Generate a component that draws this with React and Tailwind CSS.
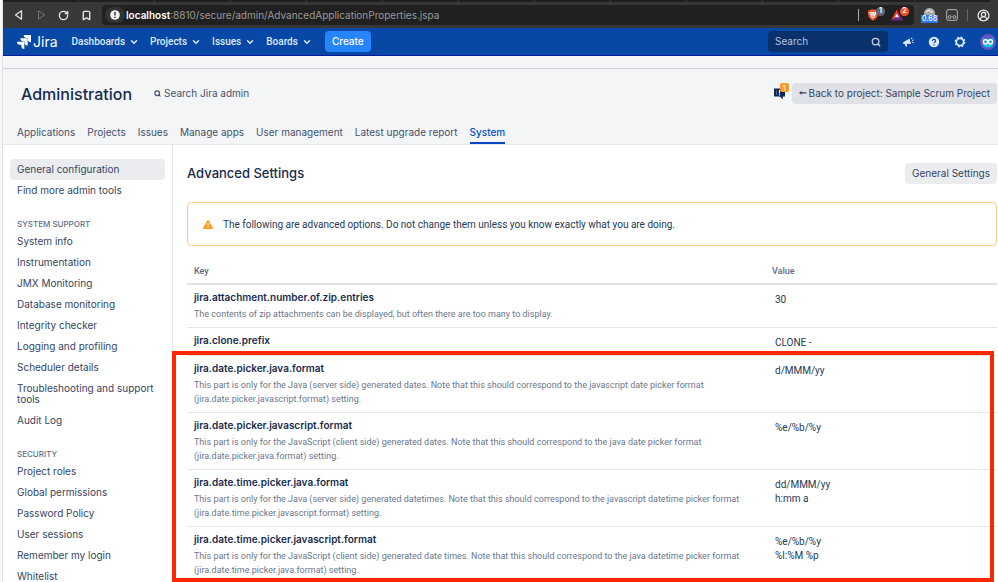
import React from 'react';
import { SiJira, SiBrave } from 'react-icons/si';
import { ChevronDown, Bookmark, RotateCw, Search, CircleUserRound } from 'lucide-react';

const navItems = ['Dashboards', 'Projects', 'Issues', 'Boards'];

const adminTabs = ['Applications', 'Projects', 'Issues', 'Manage apps', 'User management', 'Latest upgrade report', 'System'];

const sidebarSections = [
  {
    title: 'System support',
    items: [
      'System info',
      'Instrumentation',
      'JMX Monitoring',
      'Database monitoring',
      'Integrity checker',
      'Logging and profiling',
      'Scheduler details',
      'Troubleshooting and support tools',
      'Audit Log',
    ],
  },
  {
    title: 'Security',
    items: ['Project roles', 'Global permissions', 'Password Policy', 'User sessions', 'Remember my login', 'Whitelist'],
  },
];

const generalRows = [
  {
    key: 'jira.attachment.number.of.zip.entries',
    description: ['The contents of zip attachments can be displayed, but often there are too many to display.'],
    value: ['30'],
  },
  { key: 'jira.clone.prefix', description: [], value: ['CLONE -'] },
];

const dateRows = [
  {
    key: 'jira.date.picker.java.format',
    description: [
      'This part is only for the Java (server side) generated dates. Note that this should correspond to the javascript date picker format',
      '(jira.date.picker.javascript.format) setting.',
    ],
    value: ['d/MMM/yy'],
  },
  {
    key: 'jira.date.picker.javascript.format',
    description: [
      'This part is only for the JavaScript (client side) generated dates. Note that this should correspond to the java date picker format',
      '(jira.date.picker.java.format) setting.',
    ],
    value: ['%e/%b/%y'],
  },
  {
    key: 'jira.date.time.picker.java.format',
    description: [
      'This part is only for the Java (server side) generated datetimes. Note that this should correspond to the javascript datetime picker format',
      '(jira.date.time.picker.javascript.format) setting.',
    ],
    value: ['dd/MMM/yy', 'h:mm a'],
  },
  {
    key: 'jira.date.time.picker.javascript.format',
    description: [
      'This part is only for the JavaScript (client side) generated date times. Note that this should correspond to the java datetime picker format',
      '(jira.date.time.picker.java.format) setting.',
    ],
    value: ['%e/%b/%y', '%l:%M %p'],
  },
];

const BrowserBar = () => (
  <div className="bg-[#383838]">
    {/* Bottom edge of the tab strip */}
    <div className="flex h-[2px] gap-px pr-2">
      {[0, 1, 2, 3, 4, 5, 6, 7, 8, 9, 10, 11, 12].map((n) => (
        <div key={n} className="flex-1 bg-[#1f1f1f]" />
      ))}
    </div>
    <div className="flex h-[26px] items-center pl-[11px] pr-2 text-[#e4e4e4]">
      <button aria-label="Back" className="mr-3">
        <svg viewBox="0 0 10 10" className="h-[10px] w-[10px]" fill="none" stroke="currentColor" strokeWidth="1.3" strokeLinejoin="round">
          <path d="M7.500 .8v8.400L1.500 5z" />
        </svg>
      </button>
      <button aria-label="Forward" className="mr-3 text-[#777777]">
        <svg viewBox="0 0 10 10" className="h-[10px] w-[10px]" fill="none" stroke="currentColor" strokeWidth="1" strokeLinejoin="round">
          <path d="M2.500 .8v8.400L8.500 5z" />
        </svg>
      </button>
      <button aria-label="Reload" className="mr-3">
        <RotateCw className="h-[11px] w-[11px]" strokeWidth={3} />
      </button>
      <button aria-label="Bookmark" className="mr-[10px]">
        <Bookmark className="h-[11px] w-[11px]" strokeWidth={3} />
      </button>
      <div className="flex h-5 flex-1 items-center rounded bg-[#202020] pl-[3px] pr-[5px]">
        <span className="mr-px flex h-4 w-5 items-center justify-center rounded-full bg-[#333333]">
          <svg viewBox="0 0 10 10" className="h-[10px] w-[10px]">
            <circle cx="5" cy="5" r="4.8" fill="#f2f2f2" />
            <path d="M5 2v3.6M5 6.8v1.2" stroke="#202020" strokeWidth="1.3" />
          </svg>
        </span>
        <span className="flex-1 text-[10px] text-[#9a9a9a]">
          <b className="font-semibold text-white">localhost</b>:8810/secure/admin/AdvancedApplicationProperties.jspa
        </span>
        <span className="mr-2 h-3 w-px bg-[#aaaaaa]" />
        <span className="relative mr-3">
          <svg viewBox="0 0 12 12" className="h-3 w-3">
            <path d="M3.500 .5h5l1 1h1.300l.4 2-.9 4.500L8.500 10 6 11.800 3.500 10 1.700 8 .8 3.500l.4-2h1.300z" fill="#fb542b" />
            <path d="M3 3h6l.5 1.500L8 6.800v1L6 9.500 4 7.800v-1L2.500 4.500z" fill="#ffffff" />
            <path d="M3.800 4.300l1.500.6M8.200 4.300l-1.500.6M6 5v2M5 7.500h2" stroke="#fb542b" strokeWidth=".7" />
          </svg>
          <span className="absolute -right-[6px] -top-[2px] flex h-[9px] w-[9px] items-center justify-center rounded-full bg-[#5f6478] text-[7px] font-bold text-white">1</span>
        </span>
        <span className="relative mr-[6px]">
          <svg viewBox="0 0 12 12" className="h-3 w-3">
            <path d="M6 .5 0 11.500 6 7.400z" fill="#ff4724" />
            <path d="M6 .5l6 11-6-4.100z" fill="#9e1f63" />
            <path d="M0 11.500h12L6 7.200z" fill="#662d91" />
            <path d="M6 4.600 3.900 8.300h4.200z" fill="#ffffff" />
          </svg>
          <span className="absolute -right-[6px] -top-[2px] flex h-[9px] w-[9px] items-center justify-center rounded-full bg-[#fb4f26] text-[7px] font-bold text-white">2</span>
        </span>
      </div>
      <span className="relative ml-[7px] h-4 w-[17px]">
        <svg viewBox="0 0 17 10" className="h-[10px] w-[17px]">
          <path d="M3 10V6a5.500 5 0 0 1 11 0v4z" fill="#a8a8a8" />
          <path d="M5 5l3-2 2 2 2-1" fill="none" stroke="#e8e8e8" strokeWidth="1.200" />
        </svg>
        <span className="absolute bottom-0 left-0 flex h-2 w-[17px] items-center justify-center bg-[#2f7cf0] text-[7px] font-medium text-white">0.68</span>
      </span>
      <svg viewBox="0 0 12 12" className="ml-2 h-3 w-3 text-[#b5b5b5]" fill="none" stroke="currentColor">
        <rect x="0.7" y="0.7" width="10.6" height="10.6" rx="1.5" />
        <circle cx="3.7" cy="8" r="1.4" />
        <circle cx="8.3" cy="8" r="1.4" />
      </svg>
      <span className="mx-[9px] h-3 w-px bg-[#666666]" />
      <CircleUserRound className="h-[13px] w-[13px]" strokeWidth={2.4} />
    </div>
  </div>
);

const OwlAvatar = () => (
  <svg viewBox="0 0 16 16" className="h-4 w-4">
    <circle cx="8" cy="8" r="8" fill="#6554c0" />
    <path d="M3 4l1.500.8h7L13 4v6.500a5 3 0 0 1-10 0z" fill="#00c7e6" />
    <circle cx="5.500" cy="7.800" r="2.100" fill="#00a3bf" stroke="#ffffff" strokeWidth="1.400" />
    <circle cx="10.500" cy="7.800" r="2.100" fill="#00a3bf" stroke="#ffffff" strokeWidth="1.400" />
    <path d="M7.200 9.600h1.600L8 11z" fill="#ffab00" />
  </svg>
);

const Navbar = () => (
  <header className="flex h-[28px] items-center border-b border-[#001a9c] bg-[#0747a6] pl-[14px] pr-[2px] text-[#deebff]">
    <a href="#" className="mr-[14px] flex items-center gap-[2px] text-white">
      <SiJira className="h-[14px] w-[14px]" />
      <span className="text-[14px] leading-4">Jira</span>
    </a>
    <nav className="flex gap-[11px] font-['Roboto',sans-serif]">
      {navItems.map((item) => (
        <button key={item} className="flex items-center gap-1 text-[10px] font-medium">
          {item}
          <ChevronDown className="h-[10px] w-[10px]" strokeWidth={3.5} />
        </button>
      ))}
    </nav>
    <button className="ml-[13px] h-[21px] rounded-sm bg-[#2684ff] px-[7px] text-[10px] font-medium text-white">Create</button>
    <div className="ml-auto flex h-[21px] w-[120px] items-center rounded-sm bg-[#09326c] px-[7px]">
      <input aria-label="Search" placeholder="Search" className="min-w-0 flex-1 bg-transparent text-[10px] placeholder-[#b3c5e3] outline-none" />
      <Search className="h-[10px] w-[10px] text-[#c5d3ea]" strokeWidth={3} />
    </div>
    <button aria-label="Feedback" className="ml-[14px]">
      <svg viewBox="0 0 12 12" className="h-3 w-3" fill="currentColor">
        <path d="M1 6.600 7.500 2.500 9 8 4.800 7.700 5.200 10.500H3.600L2.700 8H1.400z" />
        <path d="M9.300 3.200 10 1.500M10 4.600l1.700-.8M10.200 6.200l1.500.4" stroke="currentColor" strokeWidth="1" />
      </svg>
    </button>
    <button aria-label="Help" className="ml-[14px]">
      <svg viewBox="0 0 12 12" className="h-3 w-3">
        <circle cx="6" cy="6" r="5.200" fill="#deebff" />
        <path d="M4.400 4.900a1.600 1.500 0 1 1 2.300 1.300q-.7.400-.7 1.100M6 8.200v1.200" fill="none" stroke="#0747a6" strokeWidth="1.200" />
      </svg>
    </button>
    <button aria-label="Settings" className="ml-[14px]">
      <svg viewBox="0 0 12 12" className="h-3 w-3" fill="none" stroke="currentColor">
        <circle cx="6" cy="6" r="3.600" strokeWidth="1.700" />
        <circle cx="6" cy="6" r="4.800" strokeWidth="1.300" strokeDasharray="1.900 1.870" />
      </svg>
    </button>
    <button aria-label="Profile" className="ml-[14px]">
      <OwlAvatar />
    </button>
  </header>
);

const AdminHeader = () => (
  <div className="border-b border-[#e6e8ec] bg-[#f4f5f7]">
    <div className="h-[13px] border-b border-[#cdd0dc]" />
    <div className="flex h-[49px] items-center pl-[18px] pr-px">
      <h1 className="text-[16px] font-medium text-[#172b4d]">Administration</h1>
      <button className="ml-[22px] flex items-center gap-[3px] text-[10px] text-[#42526e]">
        <Search className="h-[7px] w-[7px]" strokeWidth={4} />
        Search Jira admin
      </button>
      <button aria-label="Notifications" className="relative ml-auto mr-[6px] text-[#0b2a5c]">
        <svg viewBox="0 0 13 13" className="h-[13px] w-[13px]" fill="currentColor">
          <path d="M1 1.500h11v8H9.800v2.800L6.600 9.500H1z" />
          <path d="M3.500 3.500v4.500" stroke="#5e7397" strokeWidth=".8" />
          <path d="M6.500 3v3.500M6.500 7.300v1.200" stroke="#ffffff" strokeWidth="1" />
        </svg>
        <span className="absolute -right-[3px] -top-1 flex h-[9px] w-[9px] items-center justify-center rounded-[2px] bg-[#ff991f] text-[8px] text-white">1</span>
      </button>
      <a href="#" className="flex h-[21px] items-center gap-[2px] rounded-sm bg-[#dfe1e6] pl-[7px] pr-[7px] text-[10px] text-[#344563]">
        <svg viewBox="0 0 8 6" className="h-[6px] w-2" fill="currentColor">
          <path d="M0 1.800 2.600 0v1.200H7.500v1.300H2.600v1.200z" />
        </svg>
        Back to project: Sample Scrum Project
      </a>
    </div>
    <nav className="flex gap-3 pl-[14px]">
      {adminTabs.map((tab) => (
        <a
          key={tab}
          href="#"
          className={
            tab === 'System'
              ? 'h-[26px] border-b-2 border-[#0747c6] pt-[6px] text-[10px] leading-4 font-medium text-[#0052cc]'
              : 'h-[26px] pt-[6px] text-[10px] leading-4 text-[#42526e]'
          }
        >
          {tab}
        </a>
      ))}
    </nav>
  </div>
);

const Sidebar = () => (
  <aside className="w-[170px] shrink-0 border-r border-[#e6e8ec] px-[7px] pt-[14px] text-[10px] leading-[11px] text-[#344563]">
    <a href="#" className="block rounded-sm bg-[#ebecf0] px-[7px] py-[5px]">General configuration</a>
    <a href="#" className="block px-[7px] py-[5px]">Find more admin tools</a>
    {sidebarSections.map((section) => (
      <div key={section.title} className="pt-4">
        <h3 className="px-[7px] py-[3px] text-[8px] leading-[8px] font-medium text-[#5e6c84] uppercase">{section.title}</h3>
        {section.items.map((item) => (
          <a key={item} href="#" className="block px-[7px] py-[5px]">{item}</a>
        ))}
      </div>
    ))}
  </aside>
);

const PropertyRow = ({ row }) => (
  <tr className="border-b border-[#e4e6ea] align-top">
    <td className="px-[7px] pt-[5px] pb-[6px]">
      <div className="text-[10px] leading-[14px] font-semibold text-[#172b4d]">{row.key}</div>
      {row.description.length > 0 && (
        <div className="mt-[3px] font-['Roboto',sans-serif] text-[9px] leading-[14px] text-[#6b778c]">
          {row.description.map((line) => (
            <p key={line}>{line}</p>
          ))}
        </div>
      )}
    </td>
    <td className="pt-2 pb-[5px] pl-[10px] font-['Roboto',sans-serif] text-[10px] leading-[14px] text-[#253858]">
      {row.value.map((line) => (
        <div key={line}>{line}</div>
      ))}
    </td>
  </tr>
);

const AdvancedSettings = () => (
  <main className="min-w-0 flex-1 pl-[14px] pr-px pt-[18px]">
    <div className="flex items-center justify-between">
      <h2 className="text-[13px] leading-[21px] font-medium text-[#172b4d]">Advanced Settings</h2>
      <button className="h-[21px] rounded-sm bg-[#ebecf0] px-[7px] text-[10px] text-[#344563]">General Settings</button>
    </div>
    <div className="mt-[18px] flex h-[44px] items-center rounded-sm border border-[#ffc98a] pl-[15px] font-['Roboto',sans-serif] text-[10px] text-[#253858]">
      <svg viewBox="0 0 10 9" className="mr-[10px] h-[9px] w-[10px]">
        <path d="M5 .8 9.200 8.200H.8z" fill="#ff991f" stroke="#ff991f" strokeWidth="1.400" strokeLinejoin="round" />
        <path d="M5 3v2.600M5 6.400v1.200" stroke="#ffffff" strokeWidth="1.200" />
      </svg>
      The following are advanced options. Do not change them unless you know exactly what you are doing.
    </div>
    <table className="mt-[17px] w-full border-collapse text-left">
      <thead>
        <tr className="border-b-2 border-[#dfe1e6] font-['Roboto',sans-serif] text-[9px] leading-4 text-[#5e6c84]">
          <th className="px-[7px] pb-1 font-medium">Key</th>
          <th className="w-58 px-[7px] pb-1 font-medium">Value</th>
        </tr>
      </thead>
      <tbody>
        {generalRows.map((row) => (
          <PropertyRow key={row.key} row={row} />
        ))}
      </tbody>
      {/* Highlighted group of date formats */}
      <tbody className="relative after:pointer-events-none after:absolute after:-top-[5px] after:-left-[15px] after:right-[3px] after:bottom-[2px] after:border-4 after:border-[#ff2600] after:content-['']">
        {dateRows.map((row) => (
          <PropertyRow key={row.key} row={row} />
        ))}
      </tbody>
    </table>
  </main>
);

const App = () => (
  <div className="flex h-screen overflow-hidden bg-white font-['Inter',sans-serif]">
    {/* Edge of the window behind */}
    <div className="w-[3px] shrink-0 border-r border-[#e2e2e2] bg-[#f8f8f8]" />
    <div className="min-w-0 flex-1">
      <BrowserBar />
      <Navbar />
      <AdminHeader />
      <div className="flex">
        <Sidebar />
        <AdvancedSettings />
      </div>
    </div>
  </div>
);

export default App;
